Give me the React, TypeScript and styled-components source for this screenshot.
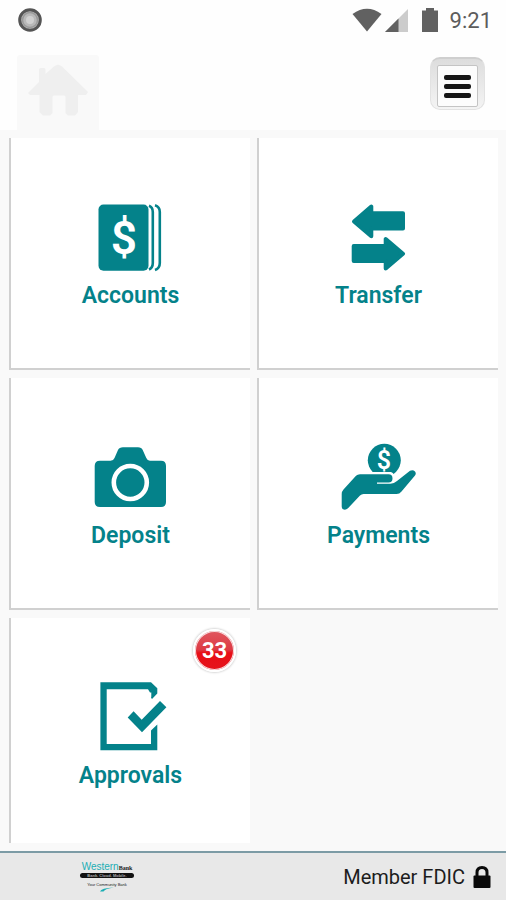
import React from "react";
import styled, { createGlobalStyle } from "styled-components";

const TEAL = "#04828a";

const GlobalStyle = createGlobalStyle`
  *, *::before, *::after { box-sizing: border-box; }
  body { margin: 0; background: #f9f9f9; font-family: Roboto, "Liberation Sans", sans-serif; }
`;

const Page = styled.div`
  display: flex;
  flex-direction: column;
  min-height: 100vh;
`;

const StatusBar = styled.div`
  display: flex;
  align-items: center;
  justify-content: space-between;
  height: 40px;
  padding: 0 14px 0 17px;
  background: #fefefe;
`;

const StatusGroup = styled.div`
  display: flex;
  align-items: center;
`;

const Clock = styled.time`
  margin-left: 12px;
  padding-top: 2px;
  font-size: 22px;
  line-height: 26px;
  color: #5c5c5c;
`;

const Header = styled.header`
  display: flex;
  justify-content: space-between;
  align-items: flex-end;
  height: 90px;
  padding: 0 21px 0 17px;
  background: #fefefe;
`;

const HomeTab = styled.button`
  display: block;
  width: 82px;
  height: 75px;
  padding: 0;
  border: 0;
  border-radius: 3px 3px 0 0;
  background: #f9f9f9;
`;

const MenuButton = styled.button`
  display: flex;
  width: 55px;
  height: 53px;
  margin-bottom: 20px;
  padding: 6px 6px 2px;
  border: 1px solid #e2e2e2;
  border-top: 2px solid #cfcfcf;
  border-radius: 10px;
  background: linear-gradient(#dddddd, #f4f4f4);
`;

const MenuFace = styled.span`
  display: flex;
  flex: 1;
  flex-direction: column;
  align-items: center;
  justify-content: center;
  gap: 4px;
  height: 100%;
  border: 1px solid #c4c4c4;
  border-radius: 2px;
  background: #fcfcfc;
`;

const MenuLine = styled.span`
  width: 27px;
  height: 5px;
  border-radius: 2px;
  background: #161616;
`;

const TileGrid = styled.main`
  display: grid;
  flex: 1;
  grid-template-columns: 1fr 1fr;
  grid-template-rows: 232px 232px minmax(225px, 1fr);
  gap: 8px 7px;
  padding: 8px 8px 8px 9px;
`;

const TileButton = styled.button<{ $open?: boolean }>`
  position: relative;
  display: flex;
  flex-direction: column;
  align-items: center;
  gap: 2px;
  padding: 62px 0 0;
  border: 0 solid #d0d0d0;
  border-left-width: 2px;
  border-bottom-width: ${({ $open }) => ($open ? "0" : "2px")};
  background: #ffffff;
  font-family: inherit;
  color: ${TEAL};
`;

const TileLabel = styled.span`
  font-size: 23px;
  font-weight: 600;
  line-height: 28px;
`;

const Badge = styled.span`
  position: absolute;
  top: 11px;
  right: 14px;
  display: flex;
  align-items: center;
  justify-content: center;
  width: 43px;
  height: 43px;
  border: 2px solid #ffffff;
  border-radius: 50%;
  background: linear-gradient(#e0575f, #dd3a44 48%, #e80e16 56%, #e5141c);
  box-shadow: inset 0 0 0 1px #f6dadc, 0 0 2px 1px #d8d8d8;
  font-size: 22px;
  font-weight: 700;
  line-height: 26px;
  color: #ffffff;
`;

const Footer = styled.footer`
  display: flex;
  align-items: center;
  justify-content: space-between;
  height: 49px;
  padding: 0 15px 0 80px;
  border-top: 2px solid #7c9ba5;
  background: #e8e8e8;
`;

const Brand = styled.div`
  display: flex;
  flex-direction: column;
  align-items: center;
  width: 54px;
  color: #222222;
`;

const BrandName = styled.div`
  display: flex;
  align-items: baseline;
  font: 10px/9px "Liberation Sans", sans-serif;
  color: #1caeb4;
`;

const BrandSuffix = styled.span`
  font: 700 6px/9px "Liberation Serif", serif;
  color: #222222;
`;

const BrandBand = styled.div`
  width: 100%;
  height: 5px;
  border-radius: 3px;
  background: #111111;
  font: 700 4px/5px "Liberation Sans", sans-serif;
  text-align: center;
  white-space: nowrap;
  color: #aaaaaa;
`;

const BrandNote = styled.div`
  margin-top: 4px;
  font: 4px/5px "Liberation Sans", sans-serif;
  white-space: nowrap;
`;

const Member = styled.div`
  display: flex;
  align-items: center;
  gap: 8px;
  font-size: 20px;
  line-height: 24px;
  color: #1c1c1c;
`;

function AccountsIcon() {
  return (
    <svg width="81" height="80" viewBox="0 0 81 80" aria-hidden="true">
      <rect x="8.5" y="4.5" width="50" height="66.3" rx="5" fill={TEAL} />
      <g fill="none" stroke={TEAL} strokeWidth="2.6">
        <path d="M59 5.8q3.8 1.5 3.8 6.2v51q0 4.8-3.8 6.5" />
        <path d="M65 5.3q4.8 1.5 4.8 6.7v51q0 5.300-4.800 7" />
      </g>
      <text x="34" y="54" textAnchor="middle" fontFamily="Roboto" fontWeight="600" fontSize="46" fill="#fff">$</text>
    </svg>
  );
}

function TransferIcon() {
  return (
    <svg width="81" height="80" viewBox="0 0 81 80" aria-hidden="true" fill={TEAL} stroke={TEAL} strokeWidth="4" strokeLinejoin="round">
      <path d="M16 21.5L33.300 6.500V13.200H65V28.600H33.300V36.200z" />
      <path d="M65 53.700L47.700 39V46H15.700V61H47.700V68.500z" />
    </svg>
  );
}

function DepositIcon() {
  return (
    <svg width="81" height="80" viewBox="0 1 81 80" aria-hidden="true">
      <path fill={TEAL} d="M10 21.700H20.500Q23.500 21.700 24.500 19L28 11Q29.300 8.300 33 8.300H48Q51.500 8.300 52.700 11L56.300 19Q57.300 21.700 60 21.700H71Q76 21.700 76 27V63Q76 68 71 68H10Q4.700 68 4.700 63V27Q4.700 21.700 10 21.700z" />
      <circle cx="40.300" cy="43.500" r="16.500" fill="none" stroke="#fff" strokeWidth="4.600" />
    </svg>
  );
}

function PaymentsIcon() {
  return (
    <svg width="81" height="80" viewBox="0 1 81 80" aria-hidden="true">
      <circle cx="46.300" cy="21.300" r="16.500" fill={TEAL} />
      <path fill="#fff" d="M28 33H53Q57 34.500 57 40H28z" />
      <path fill={TEAL} d="M3.700 55Q3.700 52.500 5.500 50.500L18 36.800Q19.500 35.300 22 35.300H50.500Q54.500 35.300 54.500 39.500Q54.500 43.500 50.500 43.500H39V44.700H52.500Q56 44.700 59 42L72 31.700Q75 30.300 77 32.500Q78.500 34.500 77 36.500L63.500 52.500Q61.500 55 58.500 55H25.500Q23.500 55 22 56.600L10 69.300Q7.500 71.500 5 70.200Q3.700 69.500 3.700 67.500z" />
      <text x="45.800" y="30" textAnchor="middle" fontFamily="Roboto" fontWeight="600" fontSize="25" fill="#fff">$</text>
    </svg>
  );
}

function ApprovalsIcon() {
  return (
    <svg width="81" height="80" viewBox="0 1 81 80" aria-hidden="true" fill={TEAL}>
      <path d="M10.400 3.300H61L67.300 9.300V14.500L62 20Q60.500 18.500 61.300 17.500V13.500H60L58 10.300H16.700V65H61V51.500L67.300 45.500V71.300H10.400z" />
      <path d="M37.700 38.400L43.600 32.300L51.700 40.700L70 22L76.400 28.300L52 53.300z" />
    </svg>
  );
}

type Tile = { label: string; Icon: () => React.JSX.Element; badge?: number; open?: boolean };

const tiles: Tile[] = [
  { label: "Accounts", Icon: AccountsIcon },
  { label: "Transfer", Icon: TransferIcon },
  { label: "Deposit", Icon: DepositIcon },
  { label: "Payments", Icon: PaymentsIcon },
  { label: "Approvals", Icon: ApprovalsIcon, badge: 33, open: true },
];

export default function App() {
  return (
    <Page>
      <GlobalStyle />
      <StatusBar>
        <svg width="26" height="26" viewBox="0 0 26 26" aria-hidden="true">
          <circle cx="13" cy="13" r="10.300" fill="#b8b8b8" stroke="#555" strokeWidth="3" />
          <circle cx="13" cy="13" r="7.500" fill="none" stroke="#999" strokeWidth="1.500" />
          <circle cx="13" cy="13" r="4" fill="#d0d0d0" />
        </svg>
        <StatusGroup>
          <svg width="86" height="26" viewBox="351 7 86 26" aria-hidden="true" fill="#616161">
            <path d="M351.500 14Q366 3.500 380.500 14L366 31.500z" />
            <path d="M384 32L407 9V32z" fill="#cccccc" />
            <path d="M384 32L397.500 18.500V32z" />
            <path d="M421 10.500H425V8H433V10.500H437V32H421z" />
          </svg>
          <Clock>9:21</Clock>
        </StatusGroup>
      </StatusBar>
      <Header>
        <HomeTab aria-label="Home">
          <svg width="82" height="75" viewBox="17 55 82 75" aria-hidden="true" fill="#efefef">
            <path d="M28 93L39 82V69.500Q39 68 41 68H44Q45.500 68 45.500 69.500V74L54 66.500Q58 63 62 66.500L88 92L86 95H78V112L75 115.500H68L65.500 113V97Q65.500 95.500 64 95.500H54Q52.500 95.500 52.500 97V113L50 115.500H43L39.500 112V95H30z" />
          </svg>
        </HomeTab>
        <MenuButton aria-label="Menu">
          <MenuFace>
            <MenuLine />
            <MenuLine />
            <MenuLine />
          </MenuFace>
        </MenuButton>
      </Header>
      <TileGrid>
        {tiles.map(({ label, Icon, badge, open }) => (
          <TileButton key={label} $open={open}>
            <Icon />
            <TileLabel>{label}</TileLabel>
            {badge !== undefined && <Badge>{badge}</Badge>}
          </TileButton>
        ))}
      </TileGrid>
      <Footer>
        <Brand>
          <BrandName>
            Western<BrandSuffix>Bank</BrandSuffix>
          </BrandName>
          <BrandBand>Bank. Cloud. Mobile.</BrandBand>
          <BrandNote>Your Community Bank</BrandNote>
          <svg width="14" height="5" viewBox="0 0 14 5" aria-hidden="true">
            <path d="M0 4.500Q1 1 14 .5Q5 1.500 3.500 4.500z" fill="#1caeb4" />
          </svg>
        </Brand>
        <Member>
          Member FDIC
          <svg width="18" height="24" viewBox="0 0 18 24" aria-hidden="true">
            <rect x="0.500" y="10.500" width="17" height="12.500" rx="1" fill="#0a0a0a" />
            <path d="M4 11V7.500Q4 2.500 9 2.500T14 7.500V11" fill="none" stroke="#0a0a0a" strokeWidth="3" />
          </svg>
        </Member>
      </Footer>
    </Page>
  );
}
